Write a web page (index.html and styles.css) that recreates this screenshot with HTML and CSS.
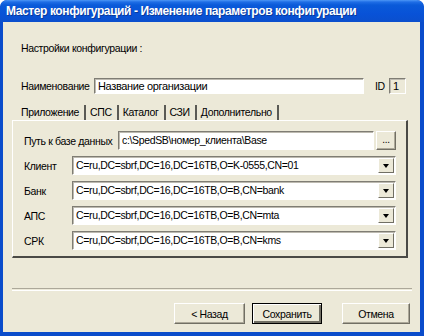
FILE: index.html
```html
<!DOCTYPE html>
<html>
<head>
<meta charset="utf-8">
<link rel="stylesheet" href="styles.css">
</head>
<body>
<div class="window">
  <div class="titlebar">Мастер конфигураций - Изменение параметров конфигурации</div>
  <div class="client">
    <div class="heading">Настройки конфигурации :</div>
    <div class="name-row">
      <span class="name-label">Наименование</span>
      <div class="field name-field">Название организации</div>
      <span class="id-label">ID</span>
      <div class="field id-field">1</div>
    </div>
    <div class="tabs">
      <div class="tab tab-active">Приложение</div>
      <div class="tab">СПС</div>
      <div class="tab">Каталог</div>
      <div class="tab">СЗИ</div>
      <div class="tab">Дополнительно</div>
    </div>
    <div class="panel">
      <div class="row">
        <span class="path-label">Путь к базе данных</span>
        <div class="field path-field">c:\SpedSB\номер_клиента\Base</div>
        <div class="btn small-btn">...</div>
      </div>
      <div class="row">
        <span class="combo-label">Клиент</span>
        <div class="combo"><span class="combo-text">C=ru,DC=sbrf,DC=16,DC=16TB,O=K-0555,CN=01</span><span class="arrow"></span></div>
      </div>
      <div class="row">
        <span class="combo-label">Банк</span>
        <div class="combo"><span class="combo-text">C=ru,DC=sbrf,DC=16,DC=16TB,O=B,CN=bank</span><span class="arrow"></span></div>
      </div>
      <div class="row">
        <span class="combo-label">АПС</span>
        <div class="combo"><span class="combo-text">C=ru,DC=sbrf,DC=16,DC=16TB,O=B,CN=mta</span><span class="arrow"></span></div>
      </div>
      <div class="row">
        <span class="combo-label">СРК</span>
        <div class="combo"><span class="combo-text">C=ru,DC=sbrf,DC=16,DC=16TB,O=B,CN=kms</span><span class="arrow"></span></div>
      </div>
    </div>
    <div class="separator"></div>
    <div class="buttons">
      <div class="btn">&lt; Назад</div>
      <div class="btn btn-default">Сохранить</div>
      <div class="btn btn-cancel">Отмена</div>
    </div>
  </div>
</div>
</body>
</html>
```

FILE: styles.css
```css
html, body {
  margin: 0;
  padding: 0;
  background: #ffffff;
}
.window {
  width: 424px;
  height: 336px;
  box-sizing: border-box;
  background: #0a4ccb;
  border-radius: 7px 7px 0 0;
  display: flex;
  flex-direction: column;
  padding: 0 4px 4px 3px;
  font-family: "Liberation Sans", Arial, sans-serif;
  font-size: 10.5px;
  letter-spacing: -0.35px;
  color: #000;
  overflow: hidden;
}
.titlebar {
  height: 22px;
  margin: 0 -4px 0 -3px;
  padding-left: 6px;
  line-height: 22px;
  color: #fff;
  font-weight: bold;
  font-size: 12px;
  letter-spacing: -0.4px;
  border-radius: 7px 7px 0 0;
  background: linear-gradient(#4d97f5 0px, #1f6ee6 2px, #0a5ad9 5px, #0852d7 14px, #0b4fcd 22px);
  text-shadow: 1px 1px 0 #0a3a9a;
  white-space: nowrap;
}
.client {
  flex: 1;
  background: #ece9d8;
  display: flex;
  flex-direction: column;
  padding: 0 10px 0 9px;
}
.heading {
  margin-top: 20px;
  height: 13px;
  line-height: 13px;
  padding-left: 9px;
}
.name-row {
  margin-top: 23px;
  display: flex;
  align-items: center;
  height: 16px;
}
.name-label {
  width: 73px;
  padding-left: 9px;
}
.field {
  box-sizing: border-box;
  background: #fff;
  border-top: 1px solid #7f7d74;
  border-left: 1px solid #7f7d74;
  border-bottom: 1px solid #fff;
  border-right: 1px solid #fff;
  box-shadow: inset 1px 1px 0 #bdbab0;
  padding-left: 3px;
  white-space: nowrap;
  overflow: hidden;
}
.name-field {
  width: 270px;
  height: 16px;
  line-height: 14px;
  font-size: 11px;
}
.id-label {
  margin-left: 11px;
  width: 14px;
}
.id-field {
  width: 17px;
  height: 16px;
  line-height: 14px;
  background: #ece9d8;
  font-size: 11px;
}
.tabs {
  margin-top: 4px;
  height: 22px;
  display: flex;
  align-items: flex-end;
}
.tab {
  height: 15px;
  line-height: 15px;
  padding: 0 5px 0 4px;
  border-right: 2px solid #5a5a55;
}
.tab-active {
  padding-left: 9px;
}
.panel {
  margin-right: 2px;
  border-top: 1px solid #fff;
  border-left: 1px solid #fff;
  border-right: 2px solid #4a4a46;
  border-bottom: 2px solid #4a4a46;
  padding: 10px 10px 6px 11px;
  display: flex;
  flex-direction: column;
  gap: 6px;
}
.row {
  display: flex;
  align-items: center;
  height: 19px;
}
.path-label {
  width: 94px;
  flex: none;
}
.path-field {
  width: 256px;
  height: 19px;
  line-height: 17px;
}
.combo-label {
  width: 48px;
  flex: none;
}
.combo {
  box-sizing: border-box;
  width: 324px;
  height: 19px;
  background: #fff;
  border-top: 1px solid #7f7d74;
  border-left: 1px solid #7f7d74;
  border-bottom: 1px solid #fff;
  border-right: 1px solid #fff;
  box-shadow: inset 1px 1px 0 #bdbab0;
  display: flex;
  align-items: center;
  padding: 0 1px 0 3px;
}
.combo-text {
  flex: 1;
  white-space: nowrap;
  overflow: hidden;
  line-height: 17px;
}
.arrow {
  box-sizing: border-box;
  width: 16px;
  height: 15px;
  background: #ece9d8;
  border-top: 1px solid #fff;
  border-left: 1px solid #fff;
  border-right: 1px solid #716f64;
  border-bottom: 1px solid #716f64;
  position: relative;
}
.arrow::after {
  content: "";
  position: absolute;
  left: 4px;
  top: 5px;
  border-left: 3.5px solid transparent;
  border-right: 3.5px solid transparent;
  border-top: 4px solid #000;
}
.separator {
  margin-top: 30px;
  height: 1px;
  border-top: 1px solid #aca899;
  border-bottom: 1px solid #fff;
  margin-right: -2px;
}
.buttons {
  margin-top: 12px;
  display: flex;
  justify-content: flex-end;
  gap: 7px;
}
.btn {
  box-sizing: border-box;
  height: 21px;
  width: 71px;
  background: #ece9d8;
  border-top: 1px solid #fff;
  border-left: 1px solid #fff;
  border-right: 1px solid #716f64;
  border-bottom: 1px solid #716f64;
  box-shadow: inset -1px -1px 0 #aca899;
  display: flex;
  align-items: center;
  justify-content: center;
}
.row .small-btn {
  width: 20px;
  height: 19px;
  margin-left: 2px;
  font-size: 10px;
  padding-bottom: 3px;
}
.btn-default {
  width: 70px;
  border: 1px solid #000;
  box-shadow: inset 1px 1px 0 #fff, inset -2px -2px 0 #716f64;
}
.btn-cancel {
  width: 68px;
  margin-left: 13px;
}
```
